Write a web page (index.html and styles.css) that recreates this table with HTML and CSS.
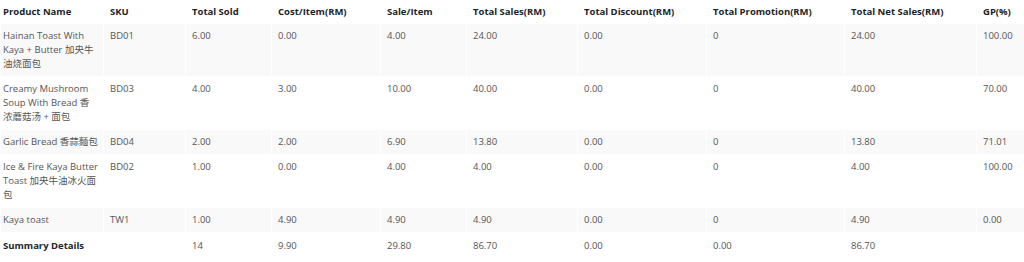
FILE: index.html
```html
<!DOCTYPE html>
<html lang="en">
  <head>
    <meta charset="UTF-8" />
    <title>Product Sales Report</title>
    <link rel="stylesheet" href="styles.css">
  </head>
  <body>
    <table class="report">
      <colgroup>
        <col class="c-name" />
        <col class="c-sku" />
        <col class="c-sold" />
        <col class="c-cost" />
        <col class="c-sale" />
        <col class="c-total" />
        <col class="c-discount" />
        <col class="c-promo" />
        <col class="c-net" />
        <col class="c-gp" />
      </colgroup>
      <thead>
        <tr>
          <th>Product Name</th>
          <th>SKU</th>
          <th>Total Sold</th>
          <th>Cost/Item(RM)</th>
          <th>Sale/Item</th>
          <th>Total Sales(RM)</th>
          <th>Total Discount(RM)</th>
          <th>Total Promotion(RM)</th>
          <th>Total Net Sales(RM)</th>
          <th>GP(%)</th>
        </tr>
      </thead>
      <tbody>
        <tr>
          <td class="name">Hainan Toast With<br />Kaya + Butter 加央牛<br />油烧面包</td>
          <td>BD01</td>
          <td>6.00</td>
          <td>0.00</td>
          <td>4.00</td>
          <td>24.00</td>
          <td>0.00</td>
          <td>0</td>
          <td>24.00</td>
          <td>100.00</td>
        </tr>
        <tr>
          <td class="name">Creamy Mushroom<br />Soup With Bread 香<br />浓蘑菇汤 + 面包</td>
          <td>BD03</td>
          <td>4.00</td>
          <td>3.00</td>
          <td>10.00</td>
          <td>40.00</td>
          <td>0.00</td>
          <td>0</td>
          <td>40.00</td>
          <td>70.00</td>
        </tr>
        <tr>
          <td class="name">Garlic Bread 香蒜麵包</td>
          <td>BD04</td>
          <td>2.00</td>
          <td>2.00</td>
          <td>6.90</td>
          <td>13.80</td>
          <td>0.00</td>
          <td>0</td>
          <td>13.80</td>
          <td>71.01</td>
        </tr>
        <tr>
          <td class="name">Ice &amp; Fire Kaya Butter<br />Toast 加央牛油冰火面<br />包</td>
          <td>BD02</td>
          <td>1.00</td>
          <td>0.00</td>
          <td>4.00</td>
          <td>4.00</td>
          <td>0.00</td>
          <td>0</td>
          <td>4.00</td>
          <td>100.00</td>
        </tr>
        <tr>
          <td class="name">Kaya toast</td>
          <td>TW1</td>
          <td>1.00</td>
          <td>4.90</td>
          <td>4.90</td>
          <td>4.90</td>
          <td>0.00</td>
          <td>0</td>
          <td>4.90</td>
          <td>0.00</td>
        </tr>
      </tbody>
      <tfoot>
        <tr>
          <th>Summary Details</th>
          <td></td>
          <td>14</td>
          <td>9.90</td>
          <td>29.80</td>
          <td>86.70</td>
          <td>0.00</td>
          <td>0.00</td>
          <td>86.70</td>
          <td></td>
        </tr>
      </tfoot>
    </table>
  </body>
</html>
```

FILE: styles.css
```css
* {
  margin: 0;
  padding: 0;
  box-sizing: border-box;
}

body {
  font-family: "Open Sans", "Noto Sans", "Noto Sans CJK SC", sans-serif;
  font-size: 9.5px;
  color: #555;
  background: #fff;
}

.report {
  width: 100%;
  table-layout: fixed;
  border-collapse: collapse;
}

/* column widths follow the original report */
.c-name { width: 103px; }
.c-sku { width: 82px; }
.c-sold { width: 86px; }
.c-cost { width: 109px; }
.c-sale { width: 86px; }
.c-total { width: 111px; }
.c-discount { width: 129px; }
.c-promo { width: 138px; }
.c-net { width: 132px; }
.c-gp { width: 48px; }

.report th,
.report td {
  text-align: left;
  vertical-align: top;
  padding: 5px 6px;
  line-height: 14px;
  border: 1px solid #fff;
}

.report th:first-child,
.report td:first-child {
  padding-left: 2px;
  padding-right: 2px;
}

.report td.name {
  white-space: nowrap;
}

.report th {
  font-weight: 700;
  color: #212529;
}

.report thead th {
  padding-top: 4px;
  padding-bottom: 4px;
}

.report tfoot th,
.report tfoot td {
  padding-top: 6px;
}

.report tbody tr:nth-child(odd) {
  background-color: #f9f9f9;
}
```
